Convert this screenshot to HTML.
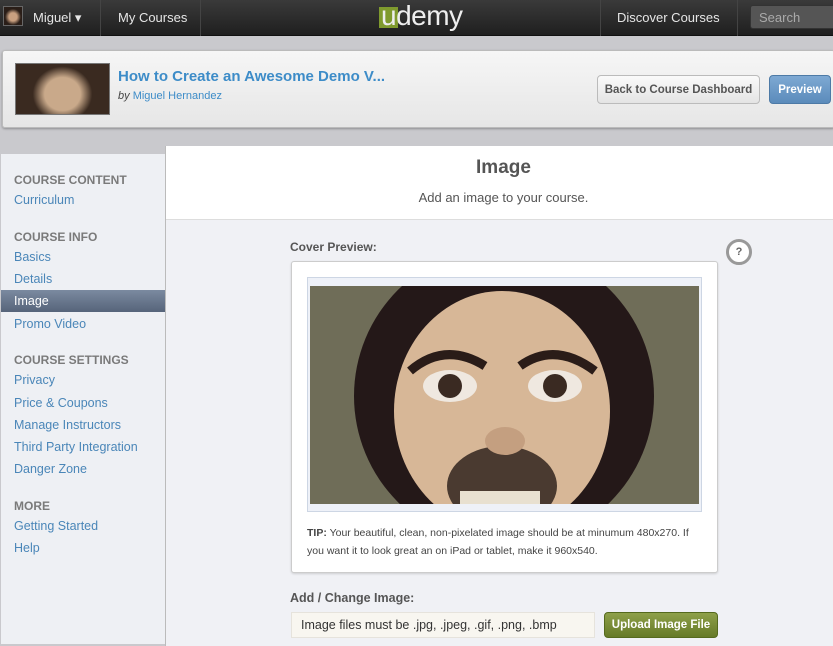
<!DOCTYPE html>
<html><head><style>
*{margin:0;padding:0;box-sizing:border-box}
body{width:833px;height:640px;overflow:hidden;background:#c9c9cd;font-family:"Liberation Sans",sans-serif;position:relative}
.a{position:absolute}
.top{left:0;top:0;width:833px;height:36px;background:linear-gradient(#3a3a3a,#1f1f1f);border-bottom:1px solid #111}
.top .t{color:#e6e6e6;font-size:13px;top:10px}
.sep{top:0;width:1px;height:36px;background:#444}
.hdr{left:2px;top:50px;width:833px;height:78px;background:linear-gradient(#f6f6f6,#e6e6e6);border:1px solid #bbb;border-radius:3px;box-shadow:0 1px 2px rgba(0,0,0,.3)}
.side{left:1px;top:154px;width:164px;height:490px;background:#eef0f4}
.side .h{left:13px;font-size:12px;font-weight:bold;color:#7a7a7a}
.side .l{left:13px;font-size:12.5px;color:#4a86b8}
.main{left:165px;top:146px;width:668px;height:500px;background:#f0f1f5;border-left:1px solid #bbb}
.btn{border-radius:4px;font-size:11.5px;font-weight:bold;text-align:center}
</style></head><body>
<div class="a top">
 <div class="a" style="left:3px;top:6px;width:20px;height:20px;background:radial-gradient(circle at 50% 55%,#c9a080 30%,#2a1e18 60%);border:1px solid #666"></div>
 <div class="a t" style="left:33px">Miguel ▾</div>
 <div class="a sep" style="left:100px"></div>
 <div class="a t" style="left:118px">My Courses</div>
 <div class="a sep" style="left:200px"></div>
 <div class="a" style="left:379px;top:7px;width:19px;height:21px;background:#7f9a2e"></div>
 <div class="a" style="left:381px;top:0px;font-size:28px;color:#eee;letter-spacing:-0.5px">udemy</div>
 <div class="a sep" style="left:600px"></div>
 <div class="a t" style="left:617px">Discover Courses</div>
 <div class="a sep" style="left:737px"></div>
 <div class="a" style="left:750px;top:5px;width:90px;height:24px;background:#555;border:1px solid #333;border-radius:3px;color:#aaa;font-size:13px;padding:4px 8px">Search</div>
</div>
<div class="a hdr">
 <div class="a" style="left:12px;top:12px;width:95px;height:52px;border:1px solid #777;background:radial-gradient(ellipse 32% 55% at 50% 60%,#c9a98a 60%,#3a2a20 100%),#5a5a48"></div>
 <div class="a" style="left:115px;top:17px;font-size:15px;font-weight:bold;color:#3d8cc8">How to Create an Awesome Demo V...</div>
 <div class="a" style="left:115px;top:39px;font-size:11px;color:#444"><i>by</i> <span style="color:#3d8cc8">Miguel Hernandez</span></div>
 <div class="a btn" style="left:594px;top:24px;width:163px;height:29px;border:1px solid #bbb;background:linear-gradient(#fafafa,#e4e4e4);color:#555;padding-top:8px">Back to Course Dashboard</div>
 <div class="a btn" style="left:766px;top:24px;width:62px;height:29px;border:1px solid #4d7aa6;background:linear-gradient(#7ea9d3,#5b8bbb);color:#fff;padding-top:8px">Preview</div>
</div>
<div class="a side">
 <div class="a h" style="top:19px">COURSE CONTENT</div>
 <div class="a l" style="top:39px">Curriculum</div>
 <div class="a h" style="top:76px">COURSE INFO</div>
 <div class="a l" style="top:96px">Basics</div>
 <div class="a l" style="top:118px">Details</div>
 <div class="a" style="left:0;top:136px;width:164px;height:22px;background:linear-gradient(#7b8aa0,#56647a)"></div>
 <div class="a l" style="top:140px;color:#fff">Image</div>
 <div class="a l" style="top:163px">Promo Video</div>
 <div class="a h" style="top:199px">COURSE SETTINGS</div>
 <div class="a l" style="top:219px">Privacy</div>
 <div class="a l" style="top:242px">Price &amp; Coupons</div>
 <div class="a l" style="top:264px">Manage Instructors</div>
 <div class="a l" style="top:286px">Third Party Integration</div>
 <div class="a l" style="top:308px">Danger Zone</div>
 <div class="a h" style="top:345px">MORE</div>
 <div class="a l" style="top:365px">Getting Started</div>
 <div class="a l" style="top:387px">Help</div>
</div>
<div class="a main">
 <div class="a" style="left:0;top:0;width:668px;height:74px;background:#fff;border-bottom:1px solid #ddd"></div>
 <div class="a" style="left:0;top:11px;width:675px;text-align:center;font-size:19px;font-weight:bold;color:#555">Image</div>
 <div class="a" style="left:0;top:44px;width:675px;text-align:center;font-size:13px;color:#555">Add an image to your course.</div>
 <div class="a" style="left:124px;top:94px;font-size:12px;font-weight:bold;color:#555">Cover Preview:</div>
 <div class="a" style="left:560px;top:93px;width:26px;height:26px;border:3px solid #999;border-radius:50%;background:#fff;font-size:11px;font-weight:bold;text-align:center;line-height:20px;color:#666">?</div>
 <div class="a" style="left:125px;top:115px;width:427px;height:312px;background:#fff;border:1px solid #ccc;border-radius:3px;box-shadow:0 1px 2px rgba(0,0,0,.15)">
  <div class="a" style="left:15px;top:15px;width:395px;height:235px;border:1px solid #cdd6e4;background:#eef1f8"></div>
  <svg class="a" style="left:18px;top:24px" width="389" height="218" viewBox="0 0 389 218">
   <rect width="389" height="218" fill="#6f6d58"/>
   <ellipse cx="194" cy="110" rx="150" ry="150" fill="#241818"/>
   <ellipse cx="192" cy="125" rx="108" ry="120" fill="#d7b797"/>
   <ellipse cx="192" cy="200" rx="55" ry="40" fill="#4a3a30"/>
   <rect x="150" y="205" width="80" height="13" fill="#e8e0d0"/>
   <path d="M100 85 Q135 55 175 80" stroke="#2a1c18" stroke-width="9" fill="none"/>
   <path d="M210 80 Q245 55 285 85" stroke="#2a1c18" stroke-width="9" fill="none"/>
   <ellipse cx="140" cy="100" rx="27" ry="16" fill="#efe8e0"/>
   <ellipse cx="245" cy="100" rx="27" ry="16" fill="#efe8e0"/>
   <circle cx="140" cy="100" r="12" fill="#3a2a22"/>
   <circle cx="245" cy="100" r="12" fill="#3a2a22"/>
   <ellipse cx="195" cy="155" rx="20" ry="14" fill="#c49f80"/>
  </svg>
  <div class="a" style="left:15px;top:262px;width:400px;font-size:10.5px;line-height:18px;color:#444"><b>TIP:</b> Your beautiful, clean, non-pixelated image should be at minumum 480x270. If you want it to look great an on iPad or tablet, make it 960x540.</div>
 </div>
 <div class="a" style="left:124px;top:445px;font-size:12.5px;font-weight:bold;color:#555">Add / Change Image:</div>
 <div class="a" style="left:125px;top:466px;width:304px;height:26px;background:#f8f6f0;border:1px solid #e6e3dc;font-size:12.5px;color:#333;padding:5px 9px">Image files must be .jpg, .jpeg, .gif, .png, .bmp</div>
 <div class="a btn" style="left:438px;top:466px;width:114px;height:26px;background:linear-gradient(#8ea049,#667a28);border:1px solid #556a1e;color:#fff;padding-top:6px">Upload Image File</div>
</div>
</body></html>
